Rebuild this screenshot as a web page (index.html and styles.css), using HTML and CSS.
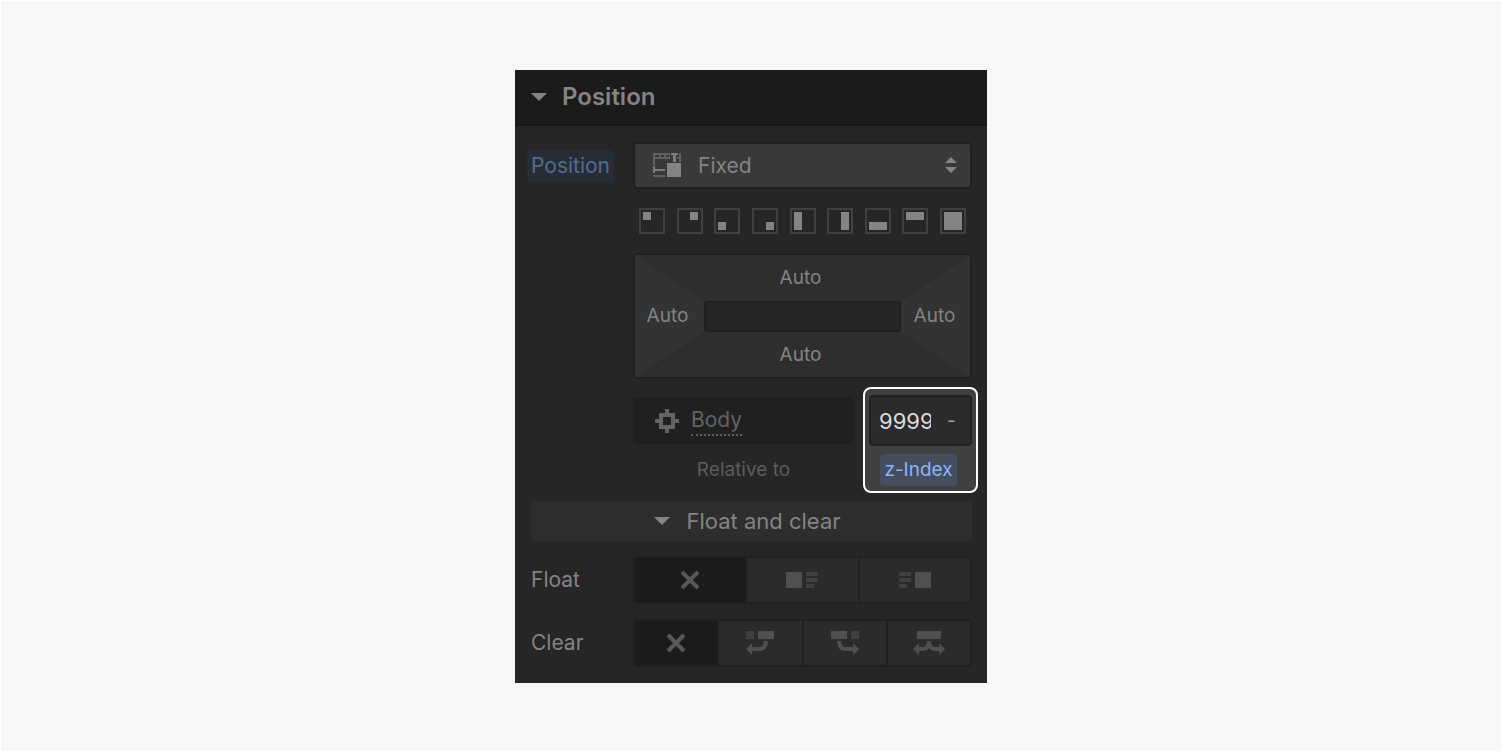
FILE: index.html
```html
<!DOCTYPE html>
<html lang="en">
<head>
    <meta charset="UTF-8">
    <title>Position</title>
    <link rel="stylesheet" href="styles.css">
</head>
<body>

    <main class="panel">
        <h2 class="panel-header">
            <button type="button" class="panel-toggle"><span class="caret"></span>Position</button>
        </h2>

        <div class="panel-body">
            <!-- Position type -->
            <div class="row">
                <label class="pill" for="position">Position</label>
                <div class="select-wrap">
                    <svg class="select-icon" width="28" height="26" viewBox="0 0 28 26">
                        <path fill="#606060" d="M0 1h16v2H0zM0 1h2v12H0zM0 5h17v2H0zM6 1h2v5H6zM11 3h2v4h-2zM16 1h1v5h-1zM26 1h2v9h-2zM24 5h4v2h-4zM0 23h12v2H0z"/>
                        <path fill="#7d7d7d" d="M18 1h7v2h-2v7h-3V3h-2zM0 14h2v7H0zM0 17h12v2H0z"/>
                        <path fill="#848484" d="M14 11h14v14H14z"/>
                    </svg>
                    <select id="position">
                        <option>Fixed</option>
                    </select>
                    <svg class="select-arrows" width="12" height="16" viewBox="0 0 12 16">
                        <path fill="#848484" d="M0 6l6-6 6 6zM0 10h12l-6 6z"/>
                    </svg>
                </div>
            </div>

            <div class="presets">
                <button type="button" class="preset" aria-label="Top left"><svg viewBox="0 0 26 26"><path d="M4 4h8v8H4z"/></svg></button>
                <button type="button" class="preset" aria-label="Top right"><svg viewBox="0 0 26 26"><path d="M13 4h8v8h-8z"/></svg></button>
                <button type="button" class="preset" aria-label="Bottom left"><svg viewBox="0 0 26 26"><path d="M4 14h8v8H4z"/></svg></button>
                <button type="button" class="preset" aria-label="Bottom right"><svg viewBox="0 0 26 26"><path d="M14 14h8v8h-8z"/></svg></button>
                <button type="button" class="preset" aria-label="Left"><svg viewBox="0 0 26 26"><path d="M4 4h8v18H4z"/></svg></button>
                <button type="button" class="preset" aria-label="Right"><svg viewBox="0 0 26 26"><path d="M14 4h8v18h-8z"/></svg></button>
                <button type="button" class="preset" aria-label="Bottom"><svg viewBox="0 0 26 26"><path d="M4 14h18v8H4z"/></svg></button>
                <button type="button" class="preset" aria-label="Top"><svg viewBox="0 0 26 26"><path d="M4 4h18v8H4z"/></svg></button>
                <button type="button" class="preset" aria-label="Full"><svg viewBox="0 0 26 26"><path d="M4 4h18v18H4z"/></svg></button>
            </div>

            <!-- Offsets -->
            <div class="offsets">
                <button type="button" class="offset top">Auto</button>
                <button type="button" class="offset left">Auto</button>
                <div class="offset-center"></div>
                <button type="button" class="offset right">Auto</button>
                <button type="button" class="offset bottom">Auto</button>
            </div>

            <div class="relation">
                <div class="relative">
                    <div class="relative-box">
                        <svg width="24" height="24" viewBox="0 0 24 24">
                            <path fill="#636363" fill-rule="evenodd" d="M10 0h4v4h6v6h4v4h-4v6h-6v4h-4v-4H4v-6H0v-4h4V4h6zM8 8v8h8V8z"/>
                        </svg>
                        <a href="#">Body</a>
                    </div>
                    <span class="caption">Relative to</span>
                </div>
                <div class="zindex">
                    <div class="zindex-box">
                        <input id="zindex" type="text" value="9999">
                        <span class="unit">-</span>
                    </div>
                    <label class="pill pill-active" for="zindex">z-Index</label>
                </div>
            </div>

            <button type="button" class="section-toggle"><span class="caret"></span>Float and clear</button>

            <!-- Float -->
            <div class="row">
                <span id="floatLabel">Float</span>
                <div class="group" role="group" aria-labelledby="floatLabel">
                    <button type="button" class="active" aria-label="None">
                        <svg width="20" height="20" viewBox="0 0 20 20"><path d="M2 2l16 16M18 2L2 18" fill="none" stroke="#585858" stroke-width="4"/></svg>
                    </button>
                    <button type="button" aria-label="Left">
                        <svg width="32" height="16" viewBox="0 0 32 16"><path fill="#505050" d="M0 0h16v16H0z"/><path fill="#404040" d="M20 0h12v4H20zM20 6h12v4H20zM20 12h8v4h-8z"/></svg>
                    </button>
                    <button type="button" aria-label="Right">
                        <svg width="32" height="16" viewBox="0 0 32 16"><path fill="#505050" d="M16 0h16v16H16z"/><path fill="#404040" d="M0 0h12v4H0zM0 6h12v4H0zM0 12h8v4H0z"/></svg>
                    </button>
                </div>
            </div>

            <!-- Clear -->
            <div class="row">
                <span id="clearLabel">Clear</span>
                <div class="group" role="group" aria-labelledby="clearLabel">
                    <button type="button" class="active" aria-label="None">
                        <svg width="20" height="20" viewBox="0 0 20 20"><path d="M2 2l16 16M18 2L2 18" fill="none" stroke="#585858" stroke-width="4"/></svg>
                    </button>
                    <button type="button" aria-label="Left">
                        <svg width="28" height="24" viewBox="0 0 28 24"><path fill="#404040" d="M0 0h8v8H0z"/><path fill="#505050" d="M12 0h16v8H12zM0 18l6-6v12z"/><path d="M5 18h8q7 0 7-8" fill="none" stroke="#505050" stroke-width="4"/></svg>
                    </button>
                    <button type="button" aria-label="Right">
                        <svg width="28" height="24" viewBox="0 0 28 24"><path fill="#404040" d="M20 0h8v8h-8z"/><path fill="#505050" d="M0 0h16v8H0zM28 18l-6-6v12z"/><path d="M23 18h-8q-7 0-7-8" fill="none" stroke="#505050" stroke-width="4"/></svg>
                    </button>
                    <button type="button" aria-label="Both">
                        <svg width="32" height="24" viewBox="0 0 32 24"><path fill="#505050" d="M4 0h24v8H4zM0 18l6-6v12zM32 18l-6-6v12z"/><path d="M5 18h4q7 0 7-8q0 8 7 8h4" fill="none" stroke="#505050" stroke-width="4"/></svg>
                    </button>
                </div>
            </div>
        </div>
    </main>

</body>
</html>
```
FILE: styles.css
```css
* {
    box-sizing: border-box;
}

body {
    margin: 0;
    min-height: 100vh;
    padding: 69px 16px;
    border-top: 1px solid #fff;
    border-left: 1px solid #fff;
    background: #f5f7f9;
    color: #848484;
    font-family: Inter, "Liberation Sans", sans-serif;
    font-size: 21px;
    font-weight: 400;
    line-height: 28px;
}

button,
input,
select {
    margin: 0;
    padding: 0;
    border: none;
    background: none;
    color: inherit;
    font: inherit;
}

button {
    cursor: pointer;
}

svg {
    display: block;
}

.panel {
    max-width: 472px;
    margin: 0 auto;
    background: #262626;
}

.panel-header {
    margin: 0;
    height: 56px;
    background: #1b1b1b;
    border-bottom: 2px solid #171717;
}

.panel-toggle {
    display: flex;
    align-items: center;
    gap: 15px;
    width: 100%;
    height: 54px;
    padding: 0 16px;
    font-size: 24px;
    font-weight: 600;
}

.caret {
    border: 8px solid transparent;
    border-top-color: currentColor;
    border-bottom: none;
}

.panel-body {
    display: flex;
    flex-direction: column;
    padding: 16px 15px 16px 16px;
}

.row {
    display: grid;
    grid-template-columns: 102px 1fr;
    align-items: center;
    margin-bottom: 15px;
}

.row:last-child {
    margin-bottom: 0;
}

.pill {
    justify-self: start;
    margin-left: -4px;
    padding: 2px 4px;
    border-radius: 4px;
    background: #272d35;
    color: #526c94;
}

.select-wrap {
    position: relative;
}

.select-wrap select {
    display: block;
    appearance: none;
    width: 100%;
    height: 47px;
    padding-left: 63px;
    border: 2px solid #202020;
    border-radius: 4px;
    background: #393939;
}

.select-icon,
.select-arrows {
    position: absolute;
    top: 10px;
    left: 20px;
    pointer-events: none;
}

.select-arrows {
    top: 15px;
    left: auto;
    right: 15px;
}

.presets {
    display: flex;
    justify-content: space-between;
    margin: 4px 6px 19px 108px;
}

.preset {
    width: 26px;
    height: 26px;
    border: 2px solid #404040;
}

.preset svg {
    width: 26px;
    height: 26px;
    margin: -2px;
    fill: #848484;
}

.offsets {
    display: grid;
    grid-template-columns: 69px 1fr 69px;
    grid-template-rows: 46px 31px 45px;
    margin-left: 102px;
    border: 2px solid #202020;
    border-radius: 4px;
    background: #2e2e2e;
    font-size: 19px;
}

.top,
.offset-center,
.bottom {
    grid-column: 2;
}

.top,
.bottom {
    padding-right: 4px;
}

.left,
.right {
    grid-row: 1 / 4;
    padding-right: 4px;
    background: #333;
    clip-path: polygon(0 0, 100% 46px, 100% 77px, 0 100%);
}

.left {
    grid-column: 1;
}

.right {
    grid-column: 3;
    padding-right: 2px;
    clip-path: polygon(100% 0, 0 46px, 0 77px, 100% 100%);
}

.offset-center {
    grid-row: 2;
    border: 2px solid #1f1f1f;
    border-radius: 4px;
    background: #262626;
}

.relation {
    display: flex;
    justify-content: space-between;
    margin: 8px -6px 8px 102px;
    font-size: 19px;
}

.relative {
    width: 221px;
    padding-top: 10px;
    color: #5c5c5c;
    text-align: center;
}

.relative-box {
    display: flex;
    align-items: center;
    gap: 12px;
    height: 47px;
    margin-bottom: 12px;
    padding-left: 22px;
    border-radius: 4px;
    background: #202020;
    font-size: 21px;
}

.relative-box a {
    border-bottom: 2px dotted #5c5c5c;
    color: #636363;
    text-decoration: none;
}

.zindex {
    display: flex;
    flex-direction: column;
    align-items: center;
    gap: 8px;
    width: 115px;
    padding: 6px 4px 5px;
    border: 2px solid #fff;
    border-radius: 8px;
    background: #404040;
}

.zindex-box {
    display: flex;
    align-items: center;
    gap: 16px;
    width: 103px;
    height: 51px;
    padding-left: 8px;
    border: 2px solid #222;
    border-radius: 4px;
    background: #2b2b2b;
    color: #a0a0a0;
}

.zindex-box input {
    width: 52px;
    color: #dcdcdc;
    font-size: 22px;
}

.pill-active {
    align-self: center;
    margin-left: -4px;
    background: #454e5e;
    color: #8ab4f8;
}

.section-toggle {
    display: flex;
    align-items: center;
    justify-content: center;
    gap: 16px;
    height: 40px;
    margin-bottom: 15px;
    padding-right: 8px;
    border-radius: 4px;
    background: #2e2e2e;
    font-size: 22px;
}

.group {
    display: flex;
    height: 48px;
    border: 2px solid #202020;
    border-radius: 4px;
    background: #2b2b2b;
    overflow: hidden;
}

.group button {
    flex: 1;
    display: flex;
    align-items: center;
    justify-content: center;
}

.group button + button {
    border-left: 2px solid #202020;
}

.group .active {
    background: #1b1b1b;
}
```
